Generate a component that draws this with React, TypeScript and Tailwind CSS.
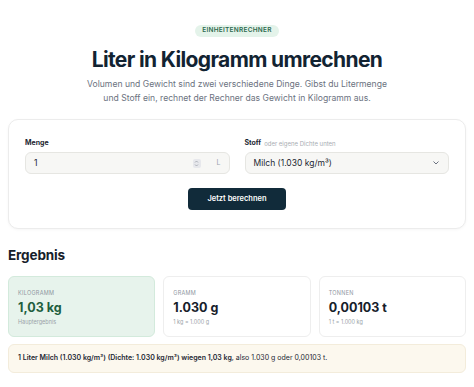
import React from "react";

export default function App() {
  const font = { fontFamily: "Inter, 'Noto Sans', sans-serif" };
  return (
    <div className="min-h-[387px] w-full bg-white text-[#16202a]" style={font}>
      <div className="px-2 pt-[25px]">
        <div className="flex flex-col items-center">
          <span className="flex h-[12px] items-center rounded-full bg-[#e4f3ea] px-[7px] text-[6.5px] font-semibold uppercase tracking-[0.04em] text-[#2d6a4f]">
            Einheitenrechner
          </span>
          <h1 className="mt-[10px] text-[21px] font-bold leading-[26px] tracking-[-0.03em] text-[#122332]">
            Liter in Kilogramm umrechnen
          </h1>
          <p className="mt-[4px] text-center text-[8.6px] leading-[14px] text-[#6b7280]">
            Volumen und Gewicht sind zwei verschiedene Dinge. Gibst du Litermenge
            <br />
            und Stoff ein, rechnet der Rechner das Gewicht in Kilogramm aus.
          </p>
        </div>

        <div className="mt-[14px] rounded-[10px] border border-[#ececec] bg-white px-[16px] pb-[18px] pt-[18px] shadow-[0_1px_3px_rgba(0,0,0,0.04)]">
          <div className="grid grid-cols-2 gap-[15px]">
            <div>
              <div className="flex h-[10px] items-center text-[7px] font-bold text-[#1d2733]">Menge</div>
              <div className="mt-[4px] flex h-[22px] items-center rounded-[6px] border border-[#e6e6e2] bg-[#f7f7f5] pl-[8px] pr-[8px] text-[8.5px] text-[#1d2733]">
                <span className="flex-1">1</span>
                <span className="mr-[16px] flex h-[9px] w-[8px] flex-col items-center justify-center rounded-[2px] bg-[#e7e8ec]">
                  <svg width="5" height="7" viewBox="0 0 5 7" fill="none" stroke="#9aa0a8" strokeWidth="0.8">
                    <path d="M1 2.5 L2.5 1 L4 2.5" />
                    <path d="M1 4.5 L2.5 6 L4 4.5" />
                  </svg>
                </span>
                <span className="text-[7px] text-[#9ca3af]">L</span>
              </div>
            </div>
            <div>
              <div className="flex h-[10px] items-center gap-[3px] text-[7px]">
                <span className="font-bold text-[#1d2733]">Stoff</span>
                <span className="text-[6px] text-[#a8adb3]">oder eigene Dichte unten</span>
              </div>
              <div className="mt-[4px] flex h-[22px] items-center rounded-[6px] border border-[#e6e6e2] bg-[#f7f7f5] pl-[8px] pr-[8px] text-[8.5px] text-[#1d2733]">
                <span className="flex-1">Milch (1.030 kg/m³)</span>
                <svg width="8" height="6" viewBox="0 0 8 6" fill="none" stroke="#6b7280" strokeWidth="1">
                  <path d="M1.5 1.5 L4 4 L6.5 1.5" />
                </svg>
              </div>
            </div>
          </div>
          <div className="mt-[14px] flex justify-center">
            <button className="h-[22px] w-[98px] rounded-[4px] bg-[#112b3a] text-[7.5px] font-semibold text-white">
              Jetzt berechnen
            </button>
          </div>
        </div>

        <h2 className="mt-[16px] text-[13.5px] font-bold leading-[20px] tracking-[-0.01em] text-[#16202a]">Ergebnis</h2>

        <div className="mt-[11px] grid grid-cols-3 gap-[8px]">
          <div className="h-[61px] rounded-[6px] border border-[#d3eadc] bg-[#e7f3ec] px-[9px] pt-[12px]">
            <div className="text-[5.5px] uppercase tracking-[0.05em] text-[#8f979f]">Kilogramm</div>
            <div className="mt-[3px] text-[12.5px] font-bold leading-[16px] text-[#1e5e3e]">1,03 kg</div>
            <div className="mt-[2px] text-[5.5px] text-[#9aa2a8]">Hauptergebnis</div>
          </div>
          <div className="h-[61px] rounded-[6px] border border-[#eeeeee] bg-white px-[9px] pt-[12px]">
            <div className="text-[5.5px] uppercase tracking-[0.05em] text-[#8f979f]">Gramm</div>
            <div className="mt-[3px] text-[12.5px] font-bold leading-[16px] text-[#16202a]">1.030 g</div>
            <div className="mt-[2px] text-[5.5px] text-[#9aa2a8]">1 kg = 1.000 g</div>
          </div>
          <div className="h-[61px] rounded-[6px] border border-[#eeeeee] bg-white px-[9px] pt-[12px]">
            <div className="text-[5.5px] uppercase tracking-[0.05em] text-[#8f979f]">Tonnen</div>
            <div className="mt-[3px] text-[12.5px] font-bold leading-[16px] text-[#16202a]">0,00103 t</div>
            <div className="mt-[2px] text-[5.5px] text-[#9aa2a8]">1 t = 1.000 kg</div>
          </div>
        </div>

        <div className="mt-[7px] flex h-[29px] items-center rounded-[6px] border border-[#f3ecdb] bg-[#fcf8ee] px-[9px] text-[7px] text-[#1d2733]">
          <span>
            <span className="font-semibold">1 Liter Milch (1.030 kg/m³) (Dichte: 1.030 kg/m³) wiegen 1,03 kg</span>, also 1.030 g oder 0,00103 t.
          </span>
        </div>
      </div>
    </div>
  );
}
